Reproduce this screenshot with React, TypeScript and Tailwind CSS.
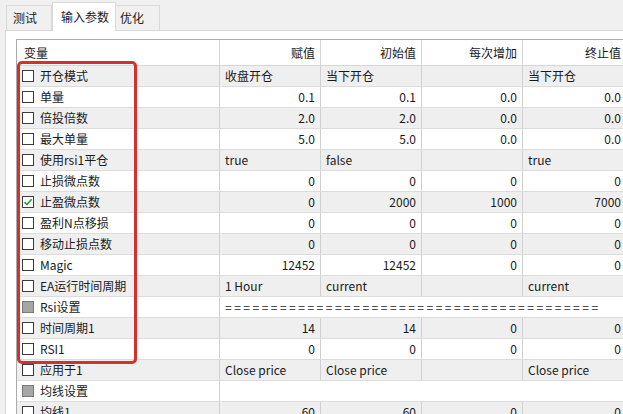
import React from 'react';

type Cell = { text: string; align?: 'left' | 'right' };
type Row = {
  name: string;
  check?: 'none' | 'checked' | 'group';
  cells?: Cell[];
  span?: string;
};

const L = (text: string): Cell => ({ text, align: 'left' });
const R = (text: string): Cell => ({ text, align: 'right' });

const rows: Row[] = [
  { name: '开仓模式', cells: [L('收盘开仓'), L('当下开仓'), L(''), L('当下开仓')] },
  { name: '单量', cells: [R('0.1'), R('0.1'), R('0.0'), R('0.0')] },
  { name: '倍投倍数', cells: [R('2.0'), R('2.0'), R('0.0'), R('0.0')] },
  { name: '最大单量', cells: [R('5.0'), R('5.0'), R('0.0'), R('0.0')] },
  { name: '使用rsi1平仓', cells: [L('true'), L('false'), L(''), L('true')] },
  { name: '止损微点数', cells: [R('0'), R('0'), R('0'), R('0')] },
  { name: '止盈微点数', check: 'checked', cells: [R('0'), R('2000'), R('1000'), R('7000')] },
  { name: '盈利N点移损', cells: [R('0'), R('0'), R('0'), R('0')] },
  { name: '移动止损点数', cells: [R('0'), R('0'), R('0'), R('0')] },
  { name: 'Magic', cells: [R('12452'), R('12452'), R('0'), R('0')] },
  { name: 'EA运行时间周期', cells: [L('1 Hour'), L('current'), L(''), L('current')] },
  { name: 'Rsi设置', check: 'group', span: '=========================================' },
  { name: '时间周期1', cells: [R('14'), R('14'), R('0'), R('0')] },
  { name: 'RSI1', cells: [R('0'), R('0'), R('0'), R('0')] },
  { name: '应用于1', cells: [L('Close price'), L('Close price'), L(''), L('Close price')] },
  { name: '均线设置', check: 'group', span: '' },
  { name: '均线1', cells: [R('60'), R('60'), R('0'), R('0')] },
];

const Checkbox: React.FC<{ kind?: Row['check'] }> = ({ kind }) => {
  if (kind === 'group') {
    return <div className="w-[12px] h-[12px] border border-[#7a7a7a] bg-[#a6a6a6] shrink-0" />;
  }
  return (
    <div className="w-[12px] h-[12px] border border-[#3c3c3c] bg-white shrink-0 flex items-center justify-center">
      {kind === 'checked' && (
        <svg width="10" height="10" viewBox="0 0 10 10">
          <path d="M1.5 5.2 L4 7.6 L8.6 2.2" fill="none" stroke="#2f9a3a" strokeWidth="1.6" />
        </svg>
      )}
    </div>
  );
};

const colW = ['w-[101px]', 'w-[101px]', 'w-[101px]', 'w-[104px]'];

const App: React.FC = () => {
  return (
    <div
      className="relative w-[623px] h-[414px] overflow-hidden bg-[#f0f0f0] text-[12px] text-[#1a1a1a]"
      style={{ fontFamily: '"Noto Sans CJK SC", "Noto Sans", sans-serif' }}
    >
      {/* Tabs */}
      <div className="flex items-end h-[30px] pl-[6px]">
        <div className="w-[46px] h-[25px] border border-b-0 border-[#d9d9d9] bg-[#f0f0f0] pl-[6px] flex items-center">
          测试
        </div>
        <div className="w-[64px] h-[29px] border border-b-0 border-[#d9d9d9] bg-white pl-[8px] flex items-center -mb-px relative z-10">
          输入参数
        </div>
        <div className="w-[44px] h-[25px] border border-b-0 border-l-0 border-[#d9d9d9] bg-[#f0f0f0] pl-[4px] flex items-center">
          优化
        </div>
      </div>

      {/* Panel */}
      <div className="ml-[5px] h-[400px] border-l border-t border-[#d9d9d9] bg-white pt-[8px] pl-[10px]">
        <div className="w-[640px] border-l border-t border-[#ababab] bg-white">
          {/* Header */}
          <div className="flex h-[26px] border-b border-[#d6d6d6] bg-white">
            <div className="w-[203px] pl-[7px] flex items-center border-r border-[#d6d6d6]">变量</div>
            {['赋值', '初始值', '每次增加', '终止值'].map((h, i) => (
              <div
                key={h}
                className={`${colW[i]} pr-[5px] flex items-center justify-end border-r border-[#d6d6d6]`}
              >
                {h}
              </div>
            ))}
          </div>

          {/* Rows */}
          {rows.map((row, idx) => (
            <div
              key={row.name}
              className={`flex h-[21px] border-b border-[#dcdcdc] ${idx % 2 === 0 ? 'bg-[#efefef]' : 'bg-white'}`}
            >
              <div className="w-[203px] pl-[5px] flex items-center gap-[6px] border-r border-[#d0d0d0]">
                <Checkbox kind={row.check} />
                <span className="leading-none">{row.name}</span>
              </div>
              {row.cells ? (
                row.cells.map((c, i) => (
                  <div
                    key={i}
                    className={`${colW[i]} flex items-center border-r border-[#d0d0d0] ${
                      c.align === 'right' ? 'justify-end pr-[5px]' : 'justify-start pl-[5px]'
                    }`}
                  >
                    <span className="leading-none whitespace-nowrap">{c.text}</span>
                  </div>
                ))
              ) : (
                <div className="w-[407px] flex items-center pl-[5px]">
                  <span className="leading-none whitespace-nowrap tracking-[2.5px]">{row.span}</span>
                </div>
              )}
            </div>
          ))}
        </div>
      </div>

      {/* Red highlight */}
      <div className="absolute left-[17px] top-[61px] w-[120px] h-[303px] border-[3px] border-[#d3312c] rounded-[5px] pointer-events-none" />
    </div>
  );
};

export default App;
